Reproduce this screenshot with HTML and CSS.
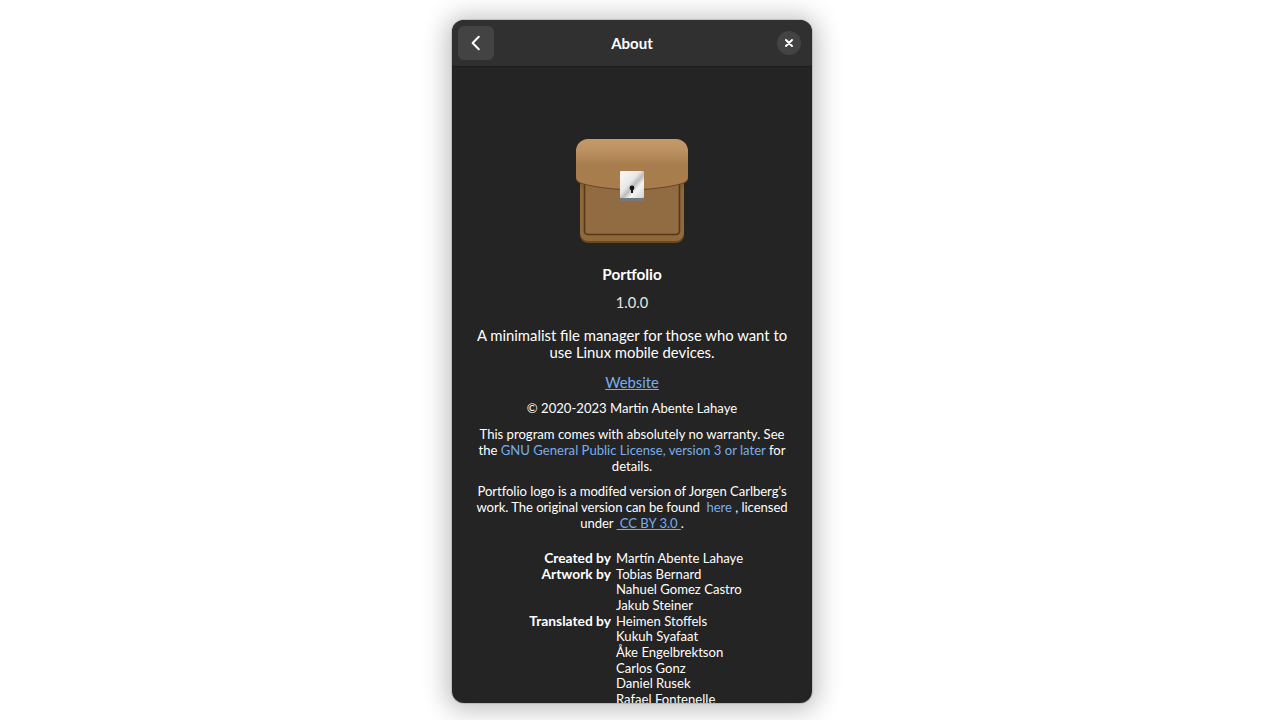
FILE: index.html
```html
<!DOCTYPE html>
<html lang="en">
<head>
<meta charset="utf-8">
<title>About</title>
<link rel="stylesheet" href="styles.css">
</head>
<body>
<div class="window">
  <header class="headerbar">
    <button class="back" aria-label="Back">
      <svg width="16" height="16" viewBox="0 0 16 16"><path d="M10.8 1.8 4.600 8l6.200 6.200" fill="none" stroke="#fff" stroke-width="2" stroke-linecap="round" stroke-linejoin="round"/></svg>
    </button>
    <div class="title">About</div>
    <button class="close" aria-label="Close">
      <svg width="10" height="10" viewBox="0 0 10 10"><path d="M2 2l6 6M8 2l-6 6" fill="none" stroke="#fff" stroke-width="2" stroke-linecap="round"/></svg>
    </button>
  </header>
  <main class="content">
    <svg class="logo" width="112" height="104" viewBox="0 0 112 104">
      <defs>
        <linearGradient id="flap" x1="0" y1="0" x2="0" y2="1">
          <stop offset="0" stop-color="#c49a6a"/>
          <stop offset="0.22" stop-color="#bd9262"/>
          <stop offset="0.5" stop-color="#a97e4f"/>
          <stop offset="1" stop-color="#a87c4d"/>
        </linearGradient>
        <linearGradient id="plate" x1="0" y1="0" x2="1" y2="1">
          <stop offset="0" stop-color="#fafafa"/>
          <stop offset="0.42" stop-color="#e8e8e8"/>
          <stop offset="0.55" stop-color="#bcbcbc"/>
          <stop offset="0.7" stop-color="#f4f4f4"/>
          <stop offset="1" stop-color="#d0d0d0"/>
        </linearGradient>
        <linearGradient id="case" x1="0" y1="0" x2="0" y2="1">
          <stop offset="0" stop-color="#6e4b27"/>
          <stop offset="0.3" stop-color="#8f683b"/>
          <stop offset="1" stop-color="#8f683b"/>
        </linearGradient>
      </defs>
      <path d="M4 30h104v66a8 8 0 0 1-8 8H12a8 8 0 0 1-8-8z" fill="#6a4623"/>
      <path d="M4 30h104v64a8 8 0 0 1-8 8H12a8 8 0 0 1-8-8z" fill="url(#case)"/>
      <path d="M8.500 30h95v62a3.500 3.500 0 0 1-3.500 3.500H12A3.500 3.500 0 0 1 8.500 92z" fill="#916c42" stroke="#563716" stroke-width="1.600"/>
      <path d="M0 12A12 12 0 0 1 12 0h88a12 12 0 0 1 12 12v26c0 3-2 5-6 6-15 4-32 6-50 6s-35-2-50-6c-4-1-6-3-6-6z" fill="#6a4623" transform="translate(0 1)"/>
      <path d="M0 12A12 12 0 0 1 12 0h88a12 12 0 0 1 12 12v26c0 3-2 5-6 6-15 4-32 6-50 6s-35-2-50-6c-4-1-6-3-6-6z" fill="url(#flap)"/>
      <rect x="44" y="32" width="24" height="30" rx="1" fill="#77787a"/>
      <rect x="44" y="32" width="24" height="27" rx="1" fill="url(#plate)"/>
      <rect x="55.400" y="54" width="1.200" height="3" fill="#fff"/>
      <circle cx="56" cy="49" r="2.400" fill="#161616"/>
      <rect x="55" y="49" width="2" height="5" fill="#161616"/>
    </svg>
    <h1 class="name">Portfolio</h1>
    <p class="version">1.0.0</p>
    <p class="description">A minimalist file manager for those who want to use Linux mobile devices.</p>
    <p class="website"><a href="#">Website</a></p>
    <p class="copyright">© 2020-2023 Martin Abente Lahaye</p>
    <p class="license">This program comes with absolutely no warranty. See the <a class="plain" href="#">GNU General Public License, version 3 or later</a> for details.</p>
    <p class="license">Portfolio logo is a modifed version of Jorgen Carlberg's work. The original version can be found&nbsp; <a class="plain" href="#">here</a> , licensed under <a href="#">&nbsp;CC BY 3.0&nbsp;</a>.</p>
    <div class="credits">
      <div class="label">Created by</div>
      <div>Martín Abente Lahaye</div>
      <div class="label">Artwork by</div>
      <div>Tobias Bernard<br>Nahuel Gomez Castro<br>Jakub Steiner</div>
      <div class="label">Translated by</div>
      <div>Heimen Stoffels<br>Kukuh Syafaat<br>Åke Engelbrektson<br>Carlos Gonz<br>Daniel Rusek<br>Rafael Fontenelle</div>
    </div>
  </main>
</div>
</body>
</html>
```
FILE: styles.css
```css
* { box-sizing: border-box; }
html, body { margin: 0; height: 100%; overflow: hidden; }
body {
  background: #fff;
  font-family: Lato, "Noto Sans", sans-serif;
  color: #fff;
  padding: 20px 0 0 452px;
}
.window {
  width: 360px;
  height: 683px;
  border-radius: 12px;
  overflow: hidden;
  background: #242424;
  display: flex;
  flex-direction: column;
  box-shadow: 0 0 0 1px rgba(0,0,0,.12), 0 2px 24px 6px rgba(0,0,0,.24);
}
.headerbar {
  flex: none;
  height: 47px;
  background: #303030;
  border-bottom: 1px solid #1c1c1c;
  display: grid;
  grid-template-columns: 1fr auto 1fr;
  align-items: center;
  padding: 0 6px 1px;
}
.headerbar button { border: 0; padding: 0; display: flex; align-items: center; justify-content: center; }
.back {
  width: 36px; height: 34px;
  border-radius: 6px;
  background: #434343;
}
.close {
  width: 24px; height: 24px;
  border-radius: 50%;
  background: #434343;
  justify-self: end;
  margin-right: 5px;
}
.title { font-size: 15px; font-weight: 700; }
.content {
  flex: 1;
  min-height: 0;
  overflow: hidden;
  padding: 72px 22px 0;
  text-align: center;
  font-size: 13.1px;
  line-height: 15.67px;
}
.logo { display: block; margin: 0 auto; }
p, h1 { margin: 0; }
a { color: #78aeed; }
a.plain { text-decoration: none; }
.name { font-size: 15.300px; font-weight: 700; line-height: 18px; margin-top: 22px; }
.version { font-size: 14.600px; line-height: 18px; margin-top: 11px; color: #e6e6e6; }
.description { font-size: 14.850px; line-height: 17px; margin-top: 15px; }
.website { font-size: 14.800px; line-height: 18px; margin-top: 11.500px; }
.copyright { margin-top: 9.500px; line-height: 16px; }
.license { margin-top: 11.400px; }
.license + .license { margin-top: 10px; letter-spacing: -.05px; }
.credits {
  margin-top: 19.700px;
  display: grid;
  grid-template-columns: 137px 1fr;
  column-gap: 5px;
  text-align: left;
  align-items: baseline;
}
.label { text-align: right; font-weight: 700; font-size: 13.800px; line-height: 14px; }
```
